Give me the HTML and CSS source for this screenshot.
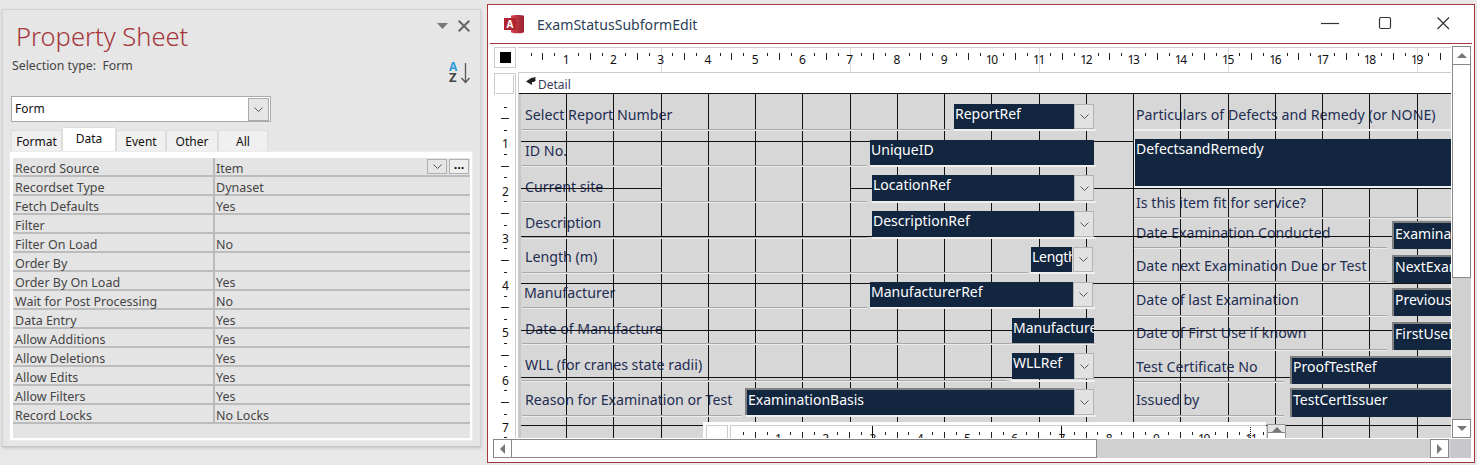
FILE: index.html
```html
<!DOCTYPE html>
<html lang="en">
<head>
<meta charset="utf-8">
<title>ExamStatusSubformEdit</title>
<link rel="stylesheet" href="styles.css">
</head>
<body>
<div class="app">
  <aside class="panel">
    <div class="panel-top">
      <h1 class="panel-title">Property Sheet</h1>
      <div class="panel-actions">
        <svg class="pa-caret" viewBox="0 0 11 6"><path d="M0 0H11L5.5 6Z"/></svg>
        <svg class="pa-close" viewBox="0 0 12 12"><path d="M.7.7 11.3 11.3M11.3.7.7 11.3"/></svg>
      </div>
    </div>
    <div class="sel-row">
      <span class="sel-type">Selection type:&nbsp; Form</span>
      <svg class="az" viewBox="0 0 22 22">
        <text class="az-a" x="0" y="9">A</text>
        <text class="az-z" x="0" y="20">Z</text>
        <path class="az-arrow" d="M16.500 1V20M12.500 16 16.500 20.500 20.500 16"/>
      </svg>
    </div>
    <div class="sel-combo">
      <span class="sel-text">Form</span>
      <span class="sel-btn"><svg class="chev" viewBox="0 0 9 5"><path d="M.5.5 4.500 4.500 8.500.5"/></svg></span>
    </div>
    <div class="tabs">
      <span class="tab t-format">Format</span>
      <span class="tab tab-on">Data</span>
      <span class="tab t-event">Event</span>
      <span class="tab t-other">Other</span>
      <span class="tab t-all">All</span>
    </div>
    <div class="props">
      <div class="prop"><span class="pk">Record Source</span><span class="pv">Item<span class="pbtns"><span class="pbtn"><svg class="chev" viewBox="0 0 9 5"><path d="M.5.5 4.500 4.500 8.500.5"/></svg></span><span class="pbtn pdots">...</span></span></span></div>
      <div class="prop"><span class="pk">Recordset Type</span><span class="pv">Dynaset</span></div>
      <div class="prop"><span class="pk">Fetch Defaults</span><span class="pv">Yes</span></div>
      <div class="prop"><span class="pk">Filter</span><span class="pv"></span></div>
      <div class="prop"><span class="pk">Filter On Load</span><span class="pv">No</span></div>
      <div class="prop"><span class="pk">Order By</span><span class="pv"></span></div>
      <div class="prop"><span class="pk">Order By On Load</span><span class="pv">Yes</span></div>
      <div class="prop"><span class="pk">Wait for Post Processing</span><span class="pv">No</span></div>
      <div class="prop"><span class="pk">Data Entry</span><span class="pv">Yes</span></div>
      <div class="prop"><span class="pk">Allow Additions</span><span class="pv">Yes</span></div>
      <div class="prop"><span class="pk">Allow Deletions</span><span class="pv">Yes</span></div>
      <div class="prop"><span class="pk">Allow Edits</span><span class="pv">Yes</span></div>
      <div class="prop"><span class="pk">Allow Filters</span><span class="pv">Yes</span></div>
      <div class="prop"><span class="pk">Record Locks</span><span class="pv">No Locks</span></div>
    </div>
  </aside>

  <section class="window">
    <header class="titlebar">
      <svg class="acc" viewBox="0 0 20 20">
        <defs><linearGradient id="accg" x1="0" x2="1" y1="0" y2="0"><stop offset="0" stop-color="#d0454f"/><stop offset="1" stop-color="#9a2230"/></linearGradient></defs>
        <path d="M7 2C7 .6 20 .6 20 2V18C20 19.800 7 19.800 7 18Z" fill="url(#accg)"/>
        <path d="M7 8C10 9.500 17 9.500 20 8M7 13C10 14.500 17 14.500 20 13" fill="none" stroke="#a52a35" stroke-width="1"/>
        <rect x="0" y="4" width="12" height="12" fill="#b0222f"/>
        <text class="acc-a" x="6" y="14">A</text>
      </svg>
      <span class="win-title">ExamStatusSubformEdit</span>
      <div class="win-btns">
        <svg class="wb wb-min" viewBox="0 0 18 14"><path d="M0 7.500H18"/></svg>
        <svg class="wb" viewBox="0 0 14 14"><rect x="1.500" y="1.500" width="11" height="11" rx="1.500"/></svg>
        <svg class="wb" viewBox="0 0 14 14"><path d="M1.500 1.500 13 13M13 1.500 1.500 13"/></svg>
      </div>
    </header>
    <div class="workspace">
      <div class="corner"><span class="corner-sq"></span></div>
      <div class="hruler">
        <span class="cm"></span><span class="cm">1</span><span class="cm">2</span><span class="cm">3</span><span class="cm">4</span><span class="cm">5</span><span class="cm">6</span><span class="cm">7</span><span class="cm">8</span><span class="cm">9</span><span class="cm tight">10</span><span class="cm tight">11</span><span class="cm tight">12</span><span class="cm tight">13</span><span class="cm tight">14</span><span class="cm tight">15</span><span class="cm tight">16</span><span class="cm tight">17</span><span class="cm tight">18</span><span class="cm tight">19</span><span class="cm"></span>
      </div>
      <div class="vscroll">
        <span class="sb-btn"><svg class="tri" viewBox="0 0 10 5"><path d="M5 0 10 5H0Z"/></svg></span>
        <span class="sb-thumb-v"></span>
        <span class="sb-fill"></span>
        <span class="sb-btn"><svg class="tri" viewBox="0 0 10 5"><path d="M0 0H10L5 5Z"/></svg></span>
      </div>
      <div class="gutter">
        <div class="gutter-head"></div>
        <div class="vruler">
          <span class="vcm"></span><span class="vcm">1</span><span class="vcm">2</span><span class="vcm">3</span><span class="vcm">4</span><span class="vcm">5</span><span class="vcm">6</span><span class="vcm">7</span>
        </div>
      </div>
      <div class="design">
        <div class="detail">
          <svg class="detail-ic" viewBox="0 0 10 9"><path d="M0 4.500 5 1 10 0 9 2 10 3 8 5 6 5 6 8Z"/></svg>
          <span>Detail</span>
        </div>
        <div class="canvas">
          <span class="lb lc t11">Select Report Number</span>
          <span class="lb lc t47">ID No.</span>
          <span class="lb lc t83">Current site</span>
          <span class="lb lc t119">Description</span>
          <span class="lb lc t153">Length (m)</span>
          <span class="lb lc2 t189">Manufacturer</span>
          <span class="lb lc t225">Date of Manufacture</span>
          <span class="lb lc t261">WLL (for cranes state radii)</span>
          <span class="lb lc t296">Reason for Examination or Test</span>
          <span class="lb rc t11">Particulars of Defects and Remedy (or NONE)</span>
          <span class="lb rc t99">Is this item fit for service?</span>
          <span class="lb rc t129">Date Examination Conducted</span>
          <span class="lb rc t162">Date next Examination Due or Test</span>
          <span class="lb rc t196">Date of last Examination</span>
          <span class="lb rc t229">Date of First Use if known</span>
          <span class="lb rc t263">Test Certificate No</span>
          <span class="lb rc t296">Issued by</span>

          <svg class="lines" viewBox="519 94 932 344">
            <path class="ln" d="M566.500 94V438M613.500 94V438M661.500 94V438M708.500 94V438M755.500 94V438M802.500 94V438M850.500 94V438M897.500 94V438M944.500 94V438M991.500 94V438M1039.500 94V438M1086.500 94V438M1133.500 94V438M1180.500 94V438M1228.500 94V438M1275.500 94V438M1322.500 94V438M1369.500 94V438M1417.500 94V438"/>
            <path class="ln" d="M520 141.500H1451M520 188.500H661M850 188.500H872M1094 188.500H1451M520 236.500H1451M520 283.500H1451M520 330.500H1451M520 377.500H1451M520 425.500H1451"/>
            <path class="sep-w" d="M954 130H1096M870 166H1096M872 202H1096M872 238H1096M1030 273H1095M870 308H1095M1011 381H1095M746 416H1096M1134 130H1451M1134 187H1451"/>
            <path class="sep-g" d="M522 129.500H950M522 165.500H867M522 201.500H867M522 237.500H867M522 272.500H1028M522 307.500H867M522 343.500H1095M522 380.500H1007M522 415.500H742M1134 217.500H1451M1134 247.500H1387M1134 281.500H1387M1134 315.500H1387M1134 349.500H1387M1134 381.500H1284M1134 415.500H1284"/>
            <path class="sep-l" d="M522 130.500H950M522 166.500H867M522 202.500H867M522 238.500H867M522 273.500H1028M522 308.500H867M522 344.500H1095M522 381.500H1007M522 416.500H742M1134 218.500H1451M1134 248.500H1387M1134 282.500H1387M1134 316.500H1387M1134 350.500H1387M1134 382.500H1284M1134 416.500H1284"/>
          </svg>

          <span class="ctl c-report">ReportRef</span>
          <span class="drop d-report"><svg class="chev" viewBox="0 0 9 5"><path d="M.5.5 4.500 4.500 8.500.5"/></svg></span>
          <span class="ctl c-unique">UniqueID</span>
          <span class="ctl c-location">LocationRef</span>
          <span class="drop d-location"><svg class="chev" viewBox="0 0 9 5"><path d="M.5.5 4.500 4.500 8.500.5"/></svg></span>
          <span class="ctl c-desc">DescriptionRef</span>
          <span class="drop d-desc"><svg class="chev" viewBox="0 0 9 5"><path d="M.5.5 4.500 4.500 8.500.5"/></svg></span>
          <span class="ctl c-length">Length</span>
          <span class="drop d-length"><svg class="chev" viewBox="0 0 9 5"><path d="M.5.5 4.500 4.500 8.500.5"/></svg></span>
          <span class="ctl c-manu">ManufacturerRef</span>
          <span class="drop d-manu"><svg class="chev" viewBox="0 0 9 5"><path d="M.5.5 4.500 4.500 8.500.5"/></svg></span>
          <span class="ctl c-mdate">ManufactureDate</span>
          <span class="ctl c-wll">WLLRef</span>
          <span class="drop d-wll"><svg class="chev" viewBox="0 0 9 5"><path d="M.5.5 4.500 4.500 8.500.5"/></svg></span>
          <span class="ctl sunk c-basis">ExaminationBasis</span>
          <span class="drop d-basis"><svg class="chev" viewBox="0 0 9 5"><path d="M.5.5 4.500 4.500 8.500.5"/></svg></span>
          <span class="ctl c-defects">DefectsandRemedy</span>
          <span class="ctl sunk c-exam">ExaminationDate</span>
          <span class="ctl sunk c-next">NextExamDate</span>
          <span class="ctl sunk c-prev">PreviousExam</span>
          <span class="ctl sunk c-first">FirstUseDate</span>
          <span class="ctl sunk c-proof">ProofTestRef</span>
          <span class="ctl sunk c-issuer">TestCertIssuer</span>

          <div class="subruler">
            <span class="sub-corner"></span>
            <div class="sub-track">
              <span class="scm"></span><span class="scm">1</span><span class="scm">2</span><span class="scm s3">3</span><span class="scm">4</span><span class="scm">5</span><span class="scm">6</span><span class="scm s7">7</span><span class="scm">8</span><span class="scm">9</span><span class="scm tight">10</span><span class="scm tight s11">11</span>
            </div>
          </div>
          <span class="sub-up"><svg class="tri" viewBox="0 0 10 5"><path d="M5 0 10 5H0Z"/></svg></span>
        </div>
      </div>
      <div class="hscroll">
        <span class="sb-btn sb-h"><svg class="tri-h" viewBox="0 0 5 10"><path d="M5 0V10L0 5Z"/></svg></span>
        <span class="sb-thumb-h"></span>
        <span class="sb-fill-h"></span>
        <span class="sb-btn sb-h"><svg class="tri-h" viewBox="0 0 5 10"><path d="M0 0V10L5 5Z"/></svg></span>
      </div>
      <div class="sb-corner"></div>
    </div>
  </section>
</div>
</body>
</html>
```
FILE: styles.css
```css
* { box-sizing: border-box; }
html, body { margin: 0; height: 465px; overflow: hidden; }
body { background: #e8e8e8; font-family: "Noto Sans", "Open Sans", sans-serif; font-size: 12px; }
.app { display: flex; align-items: flex-start; gap: 6px; padding: 4px 2px 0; }

/* Property sheet */
.panel { width: 479px; height: 438px; margin-top: 5px; background: #e6e6e6; border: 1px solid #d4d4d4; border-bottom-color: #c4c4c4; box-shadow: 0 1px 3px rgba(0,0,0,.18); padding: 0 8px; display: flex; flex-direction: column; }
.panel-top { display: flex; justify-content: space-between; align-items: flex-start; height: 47px; }
.panel-title { margin: 7px 0 0 5px; font-weight: 300; font-size: 25.500px; line-height: 38px; color: #a4373a; }
.panel-actions { display: flex; align-items: center; gap: 10px; margin: 9px 2px 0 0; height: 14px; }
.pa-caret { width: 11px; height: 6px; fill: #777; }
.pa-close { width: 12px; height: 12px; stroke: #666; stroke-width: 2; fill: none; }
.sel-row { display: flex; justify-content: space-between; align-items: flex-start; height: 39px; }
.sel-type { margin-left: 1px; font-size: 12.300px; line-height: 18px; color: #444; }
.az { width: 22px; height: 22px; margin: 5px 1px 0 0; overflow: visible; }
.az-a { font: 700 12px "Noto Sans", sans-serif; fill: #2e9bd8; }
.az-z { font: 700 13px "Noto Sans", sans-serif; fill: #444; }
.az-arrow { fill: none; stroke: #555; stroke-width: 1.300; }
.sel-combo { width: 260px; height: 26px; background: #fff; border: 1px solid #aaa; display: flex; align-items: center; justify-content: space-between; padding: 0 1px 0 3px; color: #111; }
.sel-text { margin-top: -2px; }
.sel-btn { width: 21px; height: 23px; background: #e6e6e6; border: 1px solid #aaa; display: flex; align-items: center; justify-content: center; }
.chev { width: 9px; height: 5px; fill: none; stroke: #555; stroke-width: 1; }
.tabs { display: flex; align-items: flex-end; height: 30px; color: #111; }
.tab { height: 22px; line-height: 22px; background: #f0f0f0; border: 1px solid #ddd; border-bottom: 0; text-align: center; }
.t-format { width: 51px; }
.tab-on { width: 54px; height: 25px; line-height: 22px; background: #fff; padding-bottom: 2px; }
.t-event { width: 50px; }
.t-other { width: 52px; }
.t-all { width: 50px; }
.props { width: 462px; margin-left: -1px; height: 288px; background: #e4e4e4; border: solid #fff; border-width: 6px 2px 2px 3px; outline: 1px solid #ececec; }
.prop { display: flex; height: 19px; line-height: 21px; font-size: 12.500px; color: #444; border-bottom: 2px solid #bcbcbc; }
.pk { width: 202px; padding-left: 2px; border-right: 2px solid #bcbcbc; white-space: nowrap; }
.pv { flex: 1; padding-left: 1px; position: relative; }
.pbtns { position: absolute; right: 1px; top: 1px; display: flex; gap: 2px; }
.pbtn { width: 20px; height: 15px; border: 1px solid #b0b0b0; background: #e6e6e6; display: flex; align-items: center; justify-content: center; }
.pdots { background: #eee; font-weight: 700; line-height: 9px; color: #111; align-items: flex-start; }

/* Window */
.window { width: 988px; height: 459px; background: #fff; border: 1px solid #a4373a; }
.titlebar { position: relative; display: flex; align-items: center; height: 39px; margin: 0 2px; border-bottom: 1px solid #a4373a; }
.acc { width: 20px; height: 20px; margin-left: 14px; }
.acc-a { font: 700 10px "Noto Sans", sans-serif; fill: #fff; text-anchor: middle; }
.win-title { margin-left: 13px; font-size: 14.100px; color: #2c3e55; }
.win-btns { margin: -2px 22px 0 auto; display: flex; gap: 44px; }
.wb { width: 14px; height: 14px; fill: none; stroke: #333; stroke-width: 1.200; }
.wb-min { width: 18px; margin-right: -5px; }
.workspace { display: grid; grid-template-columns: 24px 933px 19px; grid-template-rows: 27px 365px 20px; padding: 2px 2px 4px 6px; }
.corner { width: 22px; height: 21px; margin-top: 1px; border: 1px solid #ccc; display: flex; align-items: center; justify-content: center; }
.corner-sq { width: 11px; height: 11px; background: #000; }
.hruler { display: flex; margin-top: 1px; overflow: hidden; border-top: 1px solid #ccc; border-bottom: 1px solid #ccc; background: linear-gradient(90deg, #ddd 1px, transparent 1px) 143px 0 / 189px 100%; }
.cm { flex: 0 0 47.250px; height: 24px; text-align: center; line-height: 22px; padding-top: 1px; font-size: 12px; color: #111; background:
  linear-gradient(#222, #222) 0 5px / 1px 7px no-repeat,
  linear-gradient(#222, #222) 11.800px 5px / 1px 3px no-repeat,
  linear-gradient(#222, #222) 35.400px 5px / 1px 3px no-repeat; }
.hruler .cm:first-child { margin-left: -22.800px; }
.tight { letter-spacing: -1.200px; }
.vscroll { display: flex; flex-direction: column; grid-row: 1 / 3; grid-column: 3; margin-left: 1px; width: 19px; background: #d0d0d0; }
.sb-btn { display: flex; align-items: center; justify-content: center; width: 19px; height: 19px; background: #fff; border: 1px solid #888; }
.tri { width: 10px; height: 5px; fill: #777; }
.tri-h { width: 5px; height: 10px; fill: #777; }
.sb-thumb-v { height: 213px; background: #fff; border: solid #888; border-width: 0 1px 1px; }
.sb-fill { flex: 1; }
.gutter { display: flex; flex-direction: column; }
.gutter-head { width: 22px; height: 22px; border: 1px solid #ccc; border-bottom: 0; padding: 1px; box-shadow: inset 0 0 0 1px #fff, inset -1px -1px 0 1px #ccc; }
.vruler { width: 22px; height: 343px; overflow: hidden; border-right: 1px solid #ccc; }
.vcm { display: block; width: 19px; height: 47.250px; margin-left: 2px; text-align: center; line-height: 52px; font-size: 12px; color: #111; background:
  linear-gradient(#222, #222) 5px 0 / 8px 1px no-repeat,
  linear-gradient(#222, #222) 8px 11.800px / 3px 1px no-repeat,
  linear-gradient(#222, #222) 8px 35.400px / 3px 1px no-repeat; }
.vruler .vcm:first-child { margin-top: -23.900px; }
.design { border-left: 1px solid #ccc; display: flex; flex-direction: column; min-width: 0; }
.detail { height: 21px; flex: none; display: flex; align-items: center; gap: 2px; padding: 3px 0 0 7px; background: #fff; border-bottom: 1px solid #111; color: #3a3a5a; }
.detail-ic { width: 10px; height: 9px; margin-top: -6px; fill: #222; }
.canvas { position: relative; flex: 1; overflow: hidden; background: #d7d7d7; border-left: 2px solid #c8c8c8; }

/* Free canvas of form controls */
.lb { position: absolute; height: 20px; line-height: 20px; font-size: 14.200px; color: #1e2d52; white-space: nowrap; }
.lc { left: 4px; }
.lc2 { left: 3px; }
.rc { left: 615px; }
.t11 { top: 11px; } .t47 { top: 47px; } .t83 { top: 83px; } .t99 { top: 99px; } .t119 { top: 119px; } .t129 { top: 129px; } .t153 { top: 153px; } .t162 { top: 162px; } .t189 { top: 189px; } .t196 { top: 196px; } .t225 { top: 225px; } .t229 { top: 229px; } .t261 { top: 261px; } .t263 { top: 263px; } .t296 { top: 296px; }
.lines { position: absolute; left: -2px; top: 0; width: 932px; height: 344px; fill: none; shape-rendering: crispEdges; }
.ln { stroke: #111; stroke-width: 1; }
.sep-w { stroke: #f0f0f0; stroke-width: 2; }
.sep-g { stroke: #a8a8a8; stroke-width: 1; }
.sep-l { stroke: #ececec; stroke-width: 1; }
.ctl { position: absolute; background: #12263f; color: #fff; font-size: 14px; line-height: 20px; padding: 0 0 0 1px; white-space: nowrap; overflow: hidden; }
.sunk { border: solid #808080; border-width: 2px 0 0 2px; }
.drop { position: absolute; width: 20px; display: flex; align-items: center; justify-content: center; background: #e2e2e2; border: 1px solid #b4b4b4; }
.c-report { left: 433px; top: 10px; width: 120px; height: 25px; }
.d-report { left: 553px; top: 10px; height: 25px; }
.c-unique { left: 349px; top: 46px; width: 224px; height: 25px; }
.c-location { left: 351px; top: 81px; width: 202px; height: 26px; }
.d-location { left: 553px; top: 81px; height: 26px; }
.c-desc { left: 351px; top: 117px; width: 202px; height: 26px; }
.d-desc { left: 553px; top: 117px; height: 26px; }
.c-length { left: 510px; top: 153px; width: 41px; height: 25px; letter-spacing: -.3px; }
.d-length { left: 552px; top: 153px; height: 25px; }
.c-manu { left: 349px; top: 188px; width: 203px; height: 25px; }
.d-manu { left: 552px; top: 188px; height: 25px; }
.c-mdate { left: 491px; top: 224px; width: 82px; height: 25px; }
.c-wll { left: 491px; top: 259px; width: 62px; height: 26px; }
.d-wll { left: 553px; top: 259px; height: 26px; }
.c-basis { left: 224px; top: 294px; width: 329px; height: 27px; }
.d-basis { left: 553px; top: 295px; height: 26px; }
.c-defects { left: 613px; top: 45px; width: 317px; height: 47px; border-left: 1px solid #eee; line-height: 19px; }
.c-exam { left: 871px; top: 127px; width: 59px; height: 28px; line-height: 22px; }
.c-next { left: 871px; top: 161px; width: 59px; height: 28px; }
.c-prev { left: 871px; top: 194px; width: 59px; height: 28px; }
.c-first { left: 871px; top: 228px; width: 59px; height: 28px; }
.c-proof { left: 769px; top: 262px; width: 161px; height: 28px; line-height: 18px; }
.c-issuer { left: 769px; top: 294px; width: 161px; height: 29px; }
.subruler { position: absolute; left: 182px; top: 328px; width: 563px; height: 17px; background: #fff; display: flex; gap: 2px; padding-left: 3px; overflow: hidden; }
.sub-corner { flex: none; width: 22px; height: 16px; margin-top: 3px; border: 1px solid #ccc; border-bottom: 0; }
.sub-track { flex: 1; display: flex; margin-top: 3px; border-top: 1px solid #ccc; border-left: 1px solid #ccc; overflow: hidden; }
.scm { flex: 0 0 47.250px; height: 14px; text-align: center; line-height: 22px; padding-top: 2px; font-size: 12px; color: #111; background:
  linear-gradient(#222, #222) 0 6px / 1px 8px no-repeat,
  linear-gradient(#222, #222) 11.800px 6px / 1px 3px no-repeat,
  linear-gradient(#222, #222) 35.400px 6px / 1px 3px no-repeat; }
.scm:first-child { margin-left: -23.500px; }
.s3, .s7, .s11 { position: relative; }
.s3::after, .s7::after, .s11::after { content: ""; position: absolute; left: 23px; top: -3px; height: 17px; border-left: 1px solid #111; }
.s11::after { border-left-style: dotted; }
.sub-up { position: absolute; left: 746px; top: 330px; width: 19px; height: 14px; background: #e4e4e4; border: 1px solid #999; border-bottom: 0; display: flex; justify-content: center; padding-top: 2px; box-shadow: inset 0 -5px 0 #fff, inset 0 -6px 0 #888; }
.hscroll { grid-column: 1 / 3; display: flex; align-items: stretch; margin: 1px 0 0 -1px; padding-right: 2px; background: #d0d0d0; }
.sb-h { flex: none; }
.sb-thumb-h { width: 585px; background: #fff; border: solid #888; border-width: 1px 1px 1px 0; }
.sb-fill-h { flex: 1; }
.sb-corner { width: 20px; margin-top: 1px; background: #c8c8cc; }
```
